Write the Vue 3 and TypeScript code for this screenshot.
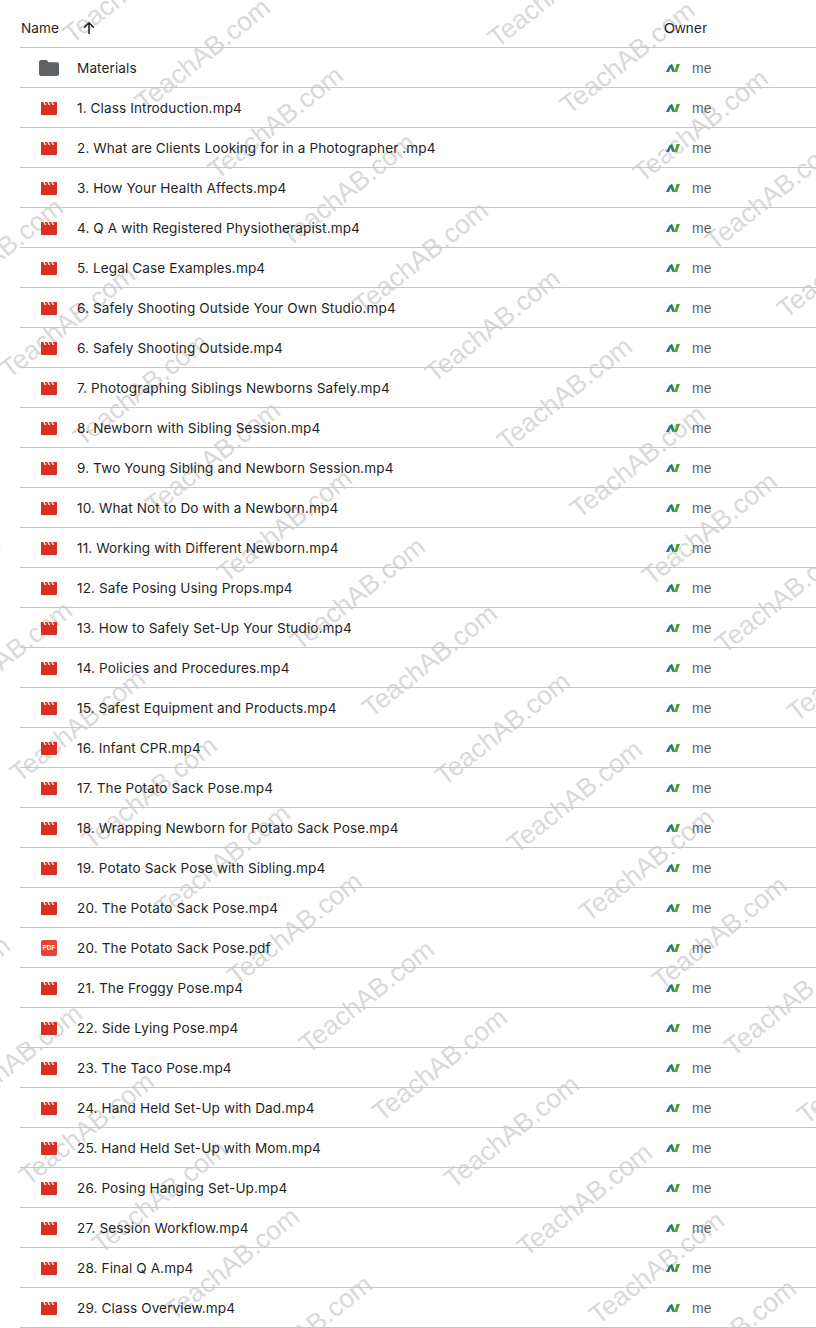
<script setup lang="ts">
const files = [
  '1. Class Introduction.mp4',
  '2. What are Clients Looking for in a Photographer .mp4',
  '3. How Your Health Affects.mp4',
  '4. Q A with Registered Physiotherapist.mp4',
  '5. Legal Case Examples.mp4',
  '6. Safely Shooting Outside Your Own Studio.mp4',
  '6. Safely Shooting Outside.mp4',
  '7. Photographing Siblings Newborns Safely.mp4',
  '8. Newborn with Sibling Session.mp4',
  '9. Two Young Sibling and Newborn Session.mp4',
  '10. What Not to Do with a Newborn.mp4',
  '11. Working with Different Newborn.mp4',
  '12. Safe Posing Using Props.mp4',
  '13. How to Safely Set-Up Your Studio.mp4',
  '14. Policies and Procedures.mp4',
  '15. Safest Equipment and Products.mp4',
  '16. Infant CPR.mp4',
  '17. The Potato Sack Pose.mp4',
  '18. Wrapping Newborn for Potato Sack Pose.mp4',
  '19. Potato Sack Pose with Sibling.mp4',
  '20. The Potato Sack Pose.mp4',
  '20. The Potato Sack Pose.pdf',
  '21. The Froggy Pose.mp4',
  '22. Side Lying Pose.mp4',
  '23. The Taco Pose.mp4',
  '24. Hand Held Set-Up with Dad.mp4',
  '25. Hand Held Set-Up with Mom.mp4',
  '26. Posing Hanging Set-Up.mp4',
  '27. Session Workflow.mp4',
  '28. Final Q A.mp4',
  '29. Class Overview.mp4',
]

// watermark is a skewed lattice: a runs down-right, b steps to the next diagonal
const marks: { x: number; y: number }[] = []
for (let i = -6; i < 7; i++) {
  for (let j = -14; j < 24; j++) {
    const x = 75 + j * 72.4 - i * 280
    const y = 48 + j * 67.8 + i * 132
    if (x > -190 && x < 816 && y > -5 && y < 1450) marks.push({ x, y })
  }
}
</script>

<template>
  <div class="drive-list">
    <div class="row head">
      <div class="name-col">
        <span class="head-name">Name</span>
        <svg class="sort" width="18" height="18" viewBox="0 0 24 24" fill="none" stroke="currentColor" stroke-width="2"><path d="M12 20V5M5.5 11.5 12 5l6.5 6.5"/></svg>
      </div>
      <div class="owner-col head-owner">Owner</div>
    </div>

    <div class="row">
      <div class="name-col">
        <span class="icon-slot">
          <svg width="20" height="16" viewBox="0 0 20 16"><path d="M2 0h5.6l2 2.2H18a2 2 0 0 1 2 2V14a2 2 0 0 1-2 2H2a2 2 0 0 1-2-2V2a2 2 0 0 1 2-2Z" fill="#5f6368"/></svg>
        </span>
        <span class="file-name">Materials</span>
      </div>
      <div class="owner-col">
        <span class="avatar"><svg width="14" height="8" viewBox="0 0 14 8"><path d="M0 8 3.4 1.4 6.2 0 3 8Z" fill="#1a6fb0"/><path d="M3.6 1.6 6.2 0l2.6 6.4L6.4 8Z" fill="#1f8a4c"/><path d="M6.4 8 8.8 6.4 10.6 0H14l-3 8Z" fill="#4f9f2f"/></svg></span>
        <span class="me">me</span>
      </div>
    </div>

    <div v-for="f in files" :key="f" class="row">
      <div class="name-col">
        <span class="icon-slot">
          <svg v-if="f.endsWith('.pdf')" width="16" height="16" viewBox="0 0 16 16"><rect width="16" height="16" rx="2" fill="#ea4335"/><text x="8" y="10.4" text-anchor="middle" class="pdf-label">PDF</text></svg>
          <svg v-else width="16" height="14" viewBox="0 0 16 14"><path d="M0 1h2.2l1.6 3h1.4L3.6 1h2.6l1.6 3h1.4L7.6 1h2.6l1.6 3h1.4l-1.6-3H16v12a1 1 0 0 1-1 1H1a1 1 0 0 1-1-1Z" fill="#d93025"/></svg>
        </span>
        <span class="file-name">{{ f }}</span>
      </div>
      <div class="owner-col">
        <span class="avatar"><svg width="14" height="8" viewBox="0 0 14 8"><path d="M0 8 3.4 1.4 6.2 0 3 8Z" fill="#1a6fb0"/><path d="M3.6 1.6 6.2 0l2.6 6.4L6.4 8Z" fill="#1f8a4c"/><path d="M6.4 8 8.8 6.4 10.6 0H14l-3 8Z" fill="#4f9f2f"/></svg></span>
        <span class="me">me</span>
      </div>
    </div>

    <div class="marks" aria-hidden="true">
      <span v-for="(m, i) in marks" :key="i" class="mark" :style="{ left: m.x + 'px', top: m.y + 'px' }">TeachAB.com</span>
    </div>
  </div>
</template>

<style scoped>
.drive-list {
  position: relative;
  width: 816px;
  height: 1328px;
  overflow: hidden;
  background: #fff;
  padding-left: 20px;
  box-sizing: border-box;
  font-family: Inter, Roboto, "Liberation Sans", sans-serif;
  color: #1f1f1f;
}

.row {
  display: flex;
  align-items: center;
  height: 40px;
  border-bottom: 1px solid #c7c7c7;
  box-sizing: border-box;
  position: relative;
  z-index: 1;
}

.row.head {
  height: 48px;
  padding-top: 8px;
}

.name-col {
  display: flex;
  align-items: center;
  width: 644px;
  flex-shrink: 0;
}

.owner-col {
  display: flex;
  align-items: center;
  font-size: 14px;
}

.head-name {
  font-size: 13.6px;
  margin-left: 1px;
  letter-spacing: 0.1px;
  color: #1f1f1f;
}

.sort {
  margin-left: 21px;
  color: #1f1f1f;
}

.head-owner {
  font-family: "Liberation Sans", Arial, sans-serif;
  letter-spacing: 0.4px;
}

.icon-slot {
  width: 57px;
  flex-shrink: 0;
  display: flex;
  justify-content: center;
  padding: 0 18px 0 19px;
  box-sizing: border-box;
}

.icon-slot svg {
  display: block;
}

.file-name {
  font-size: 13.6px;
  letter-spacing: 0.1px;
  white-space: nowrap;
}

.pdf-label {
  font-family: "Liberation Sans", Arial, sans-serif;
  font-size: 6.5px;
  font-weight: 700;
  fill: #fff;
}

.avatar {
  width: 18px;
  height: 18px;
  border-radius: 50%;
  border: 1px solid #f5f5f5;
  box-sizing: border-box;
  display: flex;
  align-items: center;
  justify-content: center;
}

.me {
  margin-left: 10px;
  font-family: "Liberation Sans", Arial, sans-serif;
  font-size: 14px;
  color: #5f6368;
}

.marks {
  position: absolute;
  inset: 0;
  pointer-events: none;
}

.mark {
  position: absolute;
  transform-origin: 0 100%;
  transform: translateY(-100%) rotate(-38.5deg);
  font-family: "Liberation Sans", Arial, sans-serif;
  font-size: 26.5px;
  line-height: 1;
  color: #d9d9d9;
  white-space: nowrap;
}
</style>
